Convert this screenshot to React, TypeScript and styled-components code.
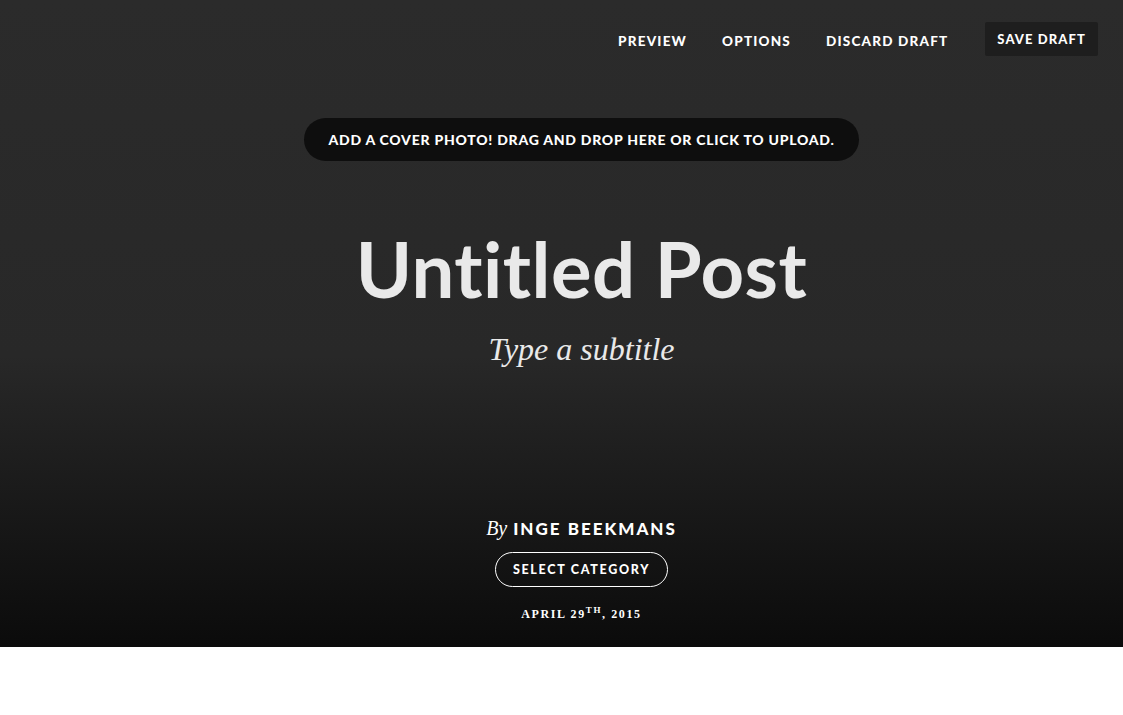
import React from "react"
import styled, { createGlobalStyle } from "styled-components"

const GlobalStyle = createGlobalStyle`
  html, body {
    margin: 0;
    padding: 0;
    background: #ffffff;
  }
  * {
    box-sizing: border-box;
  }
`

const App: React.FC = () => {
  return (
    <>
      <GlobalStyle />
      <Hero>
        <Nav>
          <NavLink>Preview</NavLink>
          <NavLink>Options</NavLink>
          <NavLink>Discard Draft</NavLink>
          <SaveButton>Save Draft</SaveButton>
        </Nav>
        <CoverUpload>Add a cover photo! Drag and drop here or click to upload.</CoverUpload>
        <Title>Untitled Post</Title>
        <Subtitle>Type a subtitle</Subtitle>
        <Meta>
          <Byline>
            <By>By</By>
            <Author>Inge Beekmans</Author>
          </Byline>
          <CategoryButton>Select Category</CategoryButton>
          <PostDate>
            April 29<sup>th</sup>, 2015
          </PostDate>
        </Meta>
      </Hero>
      <Body />
    </>
  )
}

const Hero = styled.header`
  height: 647px;
  display: flex;
  flex-direction: column;
  align-items: center;
  padding-left: 40px;
  background: linear-gradient(to bottom, #2b2b2b 0%, #282828 55%, #0b0b0b 100%);
  color: #ffffff;
  font-family: Lato, "Liberation Sans", sans-serif;
`

const Nav = styled.nav`
  align-self: stretch;
  display: flex;
  justify-content: flex-end;
  align-items: center;
  gap: 35px;
  padding: 22px 25px 0 0;
`

const NavLink = styled.a`
  padding-top: 3px;
  font-size: 13.5px;
  font-weight: 900;
  letter-spacing: 1.2px;
  text-transform: uppercase;
  color: #ffffff;
  cursor: pointer;
`

const SaveButton = styled.button`
  height: 34px;
  padding: 0 12px;
  margin-left: 2px;
  border: none;
  border-radius: 2px;
  background: #1e1e1e;
  color: #ffffff;
  font-family: inherit;
  font-size: 13px;
  font-weight: 900;
  letter-spacing: 1.1px;
  text-transform: uppercase;
`

const CoverUpload = styled.div`
  margin-top: 62px;
  height: 43px;
  padding: 0 24px;
  display: flex;
  align-items: center;
  border-radius: 22px;
  background: #0e0e0e;
  font-size: 14px;
  font-weight: 900;
  letter-spacing: 0.75px;
  text-transform: uppercase;
`

const Title = styled.h1`
  margin: 70px 0 0;
  font-size: 76px;
  line-height: 1;
  font-weight: 700;
  color: #e9e9e9;
  letter-spacing: 0.5px;
`

const Subtitle = styled.h2`
  margin: 26px 0 0;
  font-family: "Liberation Serif", serif;
  font-style: italic;
  font-weight: 400;
  font-size: 32px;
  line-height: 1;
  color: #e9e9e9;
`

const Meta = styled.div`
  margin-top: auto;
  padding-bottom: 25px;
  display: flex;
  flex-direction: column;
  align-items: center;
`

const Byline = styled.div`
  display: flex;
  align-items: baseline;
  gap: 6px;
`

const By = styled.span`
  font-family: "Liberation Serif", serif;
  font-style: italic;
  font-size: 20px;
`

const Author = styled.span`
  font-size: 17px;
  font-weight: 900;
  letter-spacing: 2px;
  text-transform: uppercase;
`

const CategoryButton = styled.button`
  margin-top: 12px;
  height: 35px;
  padding: 0 17px;
  border: 1px solid #ffffff;
  border-radius: 18px;
  background: transparent;
  color: #ffffff;
  font-family: inherit;
  font-size: 12.5px;
  font-weight: 900;
  letter-spacing: 1.7px;
  text-transform: uppercase;
`

const PostDate = styled.div`
  margin-top: 20px;
  font-family: "Liberation Serif", serif;
  font-size: 12px;
  font-weight: 700;
  letter-spacing: 1.6px;
  text-transform: uppercase;

  sup {
    font-size: 9px;
    line-height: 0;
  }
`

const Body = styled.main`
  height: 68px;
  background: #ffffff;
`

export default App
